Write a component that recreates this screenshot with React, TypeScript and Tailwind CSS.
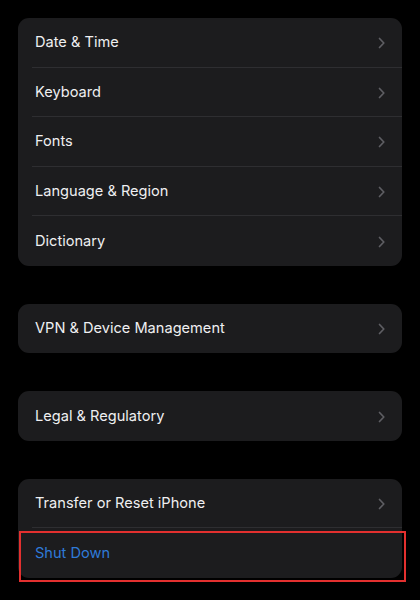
import { ReactNode } from 'react';

const Chevron = () => (
    <svg width="7" height="12" viewBox="0 0 7 12" fill="none" className="shrink-0">
        <path d="M1.5 1.5 L5.8 6 L1.5 10.5" stroke="#5e5e63" strokeWidth="1.7" strokeLinecap="round" strokeLinejoin="round" />
    </svg>
);

interface RowProps {
    label: string;
    last?: boolean;
    chevron?: boolean;
    blue?: boolean;
}

const Row = ({ label, last, chevron = true, blue }: RowProps) => (
    <div className="pl-[14px] h-[49.5px]">
        <div className={`h-full flex items-center justify-between pl-[3px] pr-[17px] pt-[2px] ${last ? '' : 'border-b border-[#2e2e31]'}`}>
            <span className={`text-[14.6px] ${blue ? 'text-[#2f7ad8]' : 'text-[#efeff1]'}`}>{label}</span>
            {chevron && <Chevron />}
        </div>
    </div>
);

const Card = ({ children }: { children: ReactNode }) => (
    <div className="relative bg-[#1c1c1e] rounded-[11px]">{children}</div>
);

export default function App() {
    return (
        <div
            className="w-[420px] h-[600px] bg-black px-[18px] pt-[18px] flex flex-col gap-[38px] overflow-hidden"
            style={{ fontFamily: 'Inter, "Noto Sans", sans-serif' }}
        >
            <Card>
                <Row label="Date & Time" />
                <Row label="Keyboard" />
                <Row label="Fonts" />
                <Row label="Language & Region" />
                <Row label="Dictionary" last />
            </Card>
            <Card>
                <Row label="VPN & Device Management" last />
            </Card>
            <Card>
                <Row label="Legal & Regulatory" last />
            </Card>
            <Card>
                <Row label="Transfer or Reset iPhone" />
                <Row label="Shut Down" last chevron={false} blue />
                <div className="absolute top-[52px] left-[1px] w-[387px] h-[51px] border-2 border-[#e3302f]" />
            </Card>
        </div>
    );
}
